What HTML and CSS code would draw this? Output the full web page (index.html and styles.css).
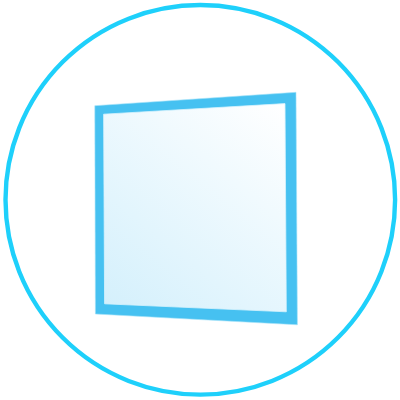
FILE: index.html
```html
<!DOCTYPE html>
<html lang="en">
<head>
<meta charset="utf-8">
<title>Window</title>
<link rel="stylesheet" href="styles.css">
</head>
<body>
<svg class="logo" viewBox="0 0 400 400" width="400" height="400" aria-label="Window">
  <defs>
    <linearGradient id="pane" gradientUnits="userSpaceOnUse" x1="120" y1="320" x2="290" y2="110">
      <stop offset="0" stop-color="#d4f0fc"/>
      <stop offset="1" stop-color="#ffffff"/>
    </linearGradient>
  </defs>
  <circle class="ring" cx="200.3" cy="199.8" r="194.8"/>
  <path class="frame" d="M94.8 105.7 296 92.3 297.4 324.8 95.4 314Z"/>
  <path class="glass" fill="url(#pane)" d="M103.6 114.2 285 103.6 286.3 311.8 104.6 303.8Z"/>
</svg>
</body>
</html>
```

FILE: styles.css
```css
html, body {
  margin: 0;
  padding: 0;
  background: #ffffff;
}

body {
  width: 400px;
  height: 400px;
  overflow: hidden;
}

.logo {
  display: block;
}

.ring {
  fill: none;
  stroke: #1ed0fb;
  stroke-width: 4.4;
}

.frame {
  fill: #46c1f1;
  stroke: #a6e2f8;
  stroke-width: 0.6;
}

.glass {
  stroke: #d8f3fd;
  stroke-width: 0.8;
}
```
